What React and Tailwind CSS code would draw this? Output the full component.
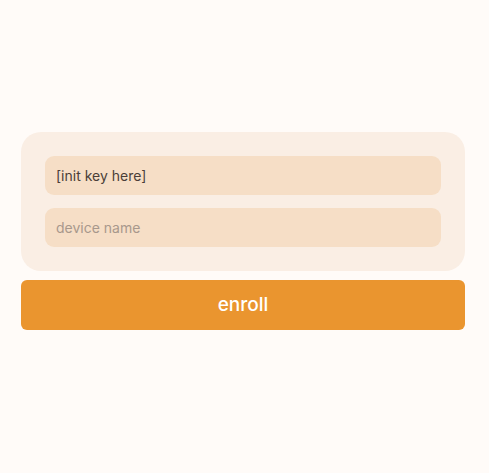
export default function App() {
  return (
    <div
      className="min-h-screen bg-[#fffbf8] pl-[21px] pr-[24px] pt-[132px]"
      style={{ fontFamily: "Inter, 'Noto Sans', sans-serif" }}
    >
      <div className="flex flex-col gap-[9px]">
        <div className="flex flex-col gap-[13px] rounded-[20px] bg-[#faeee4] p-6">
          <input
            type="text"
            defaultValue="[init key here]"
            className="h-[39px] rounded-[9px] bg-[#f6dec6] px-[11px] text-[14px] text-[#4a3e38] outline-none"
          />
          <input
            type="text"
            placeholder="device name"
            className="h-[39px] rounded-[9px] bg-[#f6dec6] px-[11px] text-[14px] text-[#4a3e38] placeholder:text-[#a8988c] outline-none"
          />
        </div>
        <button
          type="button"
          className="h-[50px] rounded-[6px] bg-[#ea952f] text-[19px] font-medium text-white"
        >
          enroll
        </button>
      </div>
    </div>
  );
}
